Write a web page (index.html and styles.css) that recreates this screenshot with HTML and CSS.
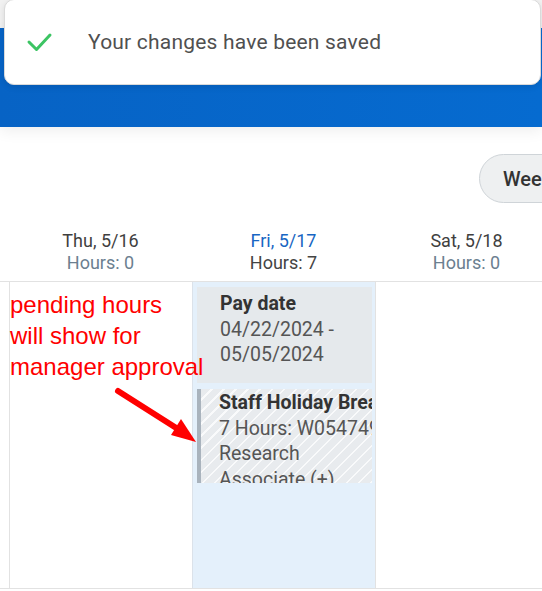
FILE: index.html
```html
<!DOCTYPE html>
<html lang="en">
<head>
    <meta charset="UTF-8">
    <meta name="viewport" content="width=device-width, initial-scale=1.0">
    <title>Time Entry - Week</title>
    <link rel="stylesheet" href="styles.css">
</head>
<body>
    <div class="top-strip"></div>
    <div class="banner"></div>

    <div class="toast">
        <svg class="toast-icon" width="30" height="30" viewBox="0 0 30 30">
            <path d="M5 15 L12.5 22.5 L26 8" fill="none" stroke="#3cc463" stroke-width="3" stroke-linecap="round" stroke-linejoin="round"/>
        </svg>
        <span class="toast-text">Your changes have been saved</span>
    </div>

    <div class="toolbar">
        <button class="view-btn">Week</button>
    </div>

    <div class="day-heads">
        <div class="day-head">
            <div class="day-name">Thu, 5/16</div>
            <div class="day-hours">Hours: 0</div>
        </div>
        <div class="day-head today">
            <div class="day-name">Fri, 5/17</div>
            <div class="day-hours">Hours: 7</div>
        </div>
        <div class="day-head">
            <div class="day-name">Sat, 5/18</div>
            <div class="day-hours">Hours: 0</div>
        </div>
    </div>

    <div class="week-grid">
        <div class="gutter"></div>
        <div class="day-col"></div>
        <div class="day-col today">
            <div class="card pay-card">
                <div class="card-title">Pay date</div>
                <div class="card-line">04/22/2024 -</div>
                <div class="card-line">05/05/2024</div>
            </div>
            <div class="card pending-card">
                <div class="card-title">Staff Holiday Break</div>
                <div class="card-line">7 Hours: W0547491</div>
                <div class="card-line">Research</div>
                <div class="card-line">Associate (+)</div>
            </div>
        </div>
        <div class="day-col"></div>
    </div>

    <!-- annotation drawn over the screenshot -->
    <div class="note">pending hours<br>will show for<br>manager approval</div>
    <svg class="note-arrow" width="542" height="591" viewBox="0 0 542 591">
        <line x1="118" y1="391" x2="181" y2="431" stroke="#ff0000" stroke-width="6" stroke-linecap="round"/>
        <polygon points="196,442 171,435 181,419" fill="#ff0000"/>
    </svg>
</body>
</html>
```

FILE: styles.css
```css
body {
    font-family: Roboto, "Liberation Sans", Arial, sans-serif;
    margin: 0;
    padding: 0;
    width: 542px;
    height: 591px;
    overflow: hidden;
    position: relative;
    background: white;
    color: #333;
}

.top-strip {
    height: 28px;
    background: #f1f1f1;
}

.banner {
    height: 99px;
    background: linear-gradient(to right, #0763c5, #066bd0);
    box-shadow: 0 4px 14px rgba(0, 0, 0, 0.07);
}

.toast {
    position: absolute;
    top: -1px;
    left: 4px;
    width: 535px;
    height: 84px;
    background: white;
    border: 1px solid #dadada;
    border-radius: 10px;
    box-shadow: 0 2px 6px rgba(0, 0, 0, 0.1);
    display: flex;
    align-items: center;
}

.toast-icon {
    margin-left: 19px;
}

.toast-text {
    margin-left: 34px;
    font-size: 21px;
    letter-spacing: 0.2px;
    color: #505050;
}

.toolbar {
    height: 93px;
    padding-left: 479px;
    display: flex;
    align-items: flex-start;
    white-space: nowrap;
}

.view-btn {
    margin-top: 27px;
    height: 49px;
    min-width: 110px;
    padding: 0 0 0 23px;
    text-align: left;
    border: 1px solid #cfd4d8;
    border-radius: 25px;
    background: #eef0f1;
    font-family: Roboto, sans-serif;
    font-size: 20px;
    font-weight: 500;
    color: #333;
}

.day-heads {
    height: 61px;
    padding-left: 9px;
    display: grid;
    grid-template-columns: 183px 183px 183px;
    box-sizing: border-box;
    padding-top: 10px;
}

.day-head {
    text-align: center;
    font-size: 18px;
    line-height: 22px;
    white-space: nowrap;
}

.day-name {
    color: #3f3f3f;
}

.day-hours {
    color: #6b7f90;
}

.day-head.today .day-name {
    color: #1866c3;
}

.day-head.today .day-hours {
    color: #444;
}

.week-grid {
    display: grid;
    grid-template-columns: 9px 183px 183px 183px;
    height: 308px;
    border-top: 1px solid #e2e2e2;
    border-bottom: 1px solid #e2e2e2;
    box-sizing: border-box;
}

.day-col {
    border-left: 1px solid #e2e2e2;
}

.day-col.today {
    background: #e4f0fb;
    border-left-color: #dbe2ea;
    padding: 5px 3px 0 4px;
}

.card {
    font-size: 19.5px;
    line-height: 25.5px;
    color: #555;
    white-space: nowrap;
    overflow: hidden;
}

.card-title {
    font-weight: 700;
    color: #333;
}

.pay-card {
    background: #e5e9ec;
    height: 96px;
    box-sizing: border-box;
    padding: 4px 0 0 23px;
}

.pending-card {
    margin-top: 6px;
    height: 94px;
    box-sizing: border-box;
    padding: 1px 0 0 18px;
    border-left: 4px solid #a9b3bd;
    background: repeating-linear-gradient(135deg, #e8ebee 0px, #e8ebee 7px, #f9fafb 7px, #f9fafb 8.5px);
}

.note {
    position: absolute;
    left: 10px;
    top: 289px;
    font-family: "Liberation Sans", Arial, sans-serif;
    font-size: 24px;
    line-height: 31px;
    color: #ff0000;
    white-space: nowrap;
}

.note-arrow {
    position: absolute;
    left: 0;
    top: 0;
    pointer-events: none;
}
```
